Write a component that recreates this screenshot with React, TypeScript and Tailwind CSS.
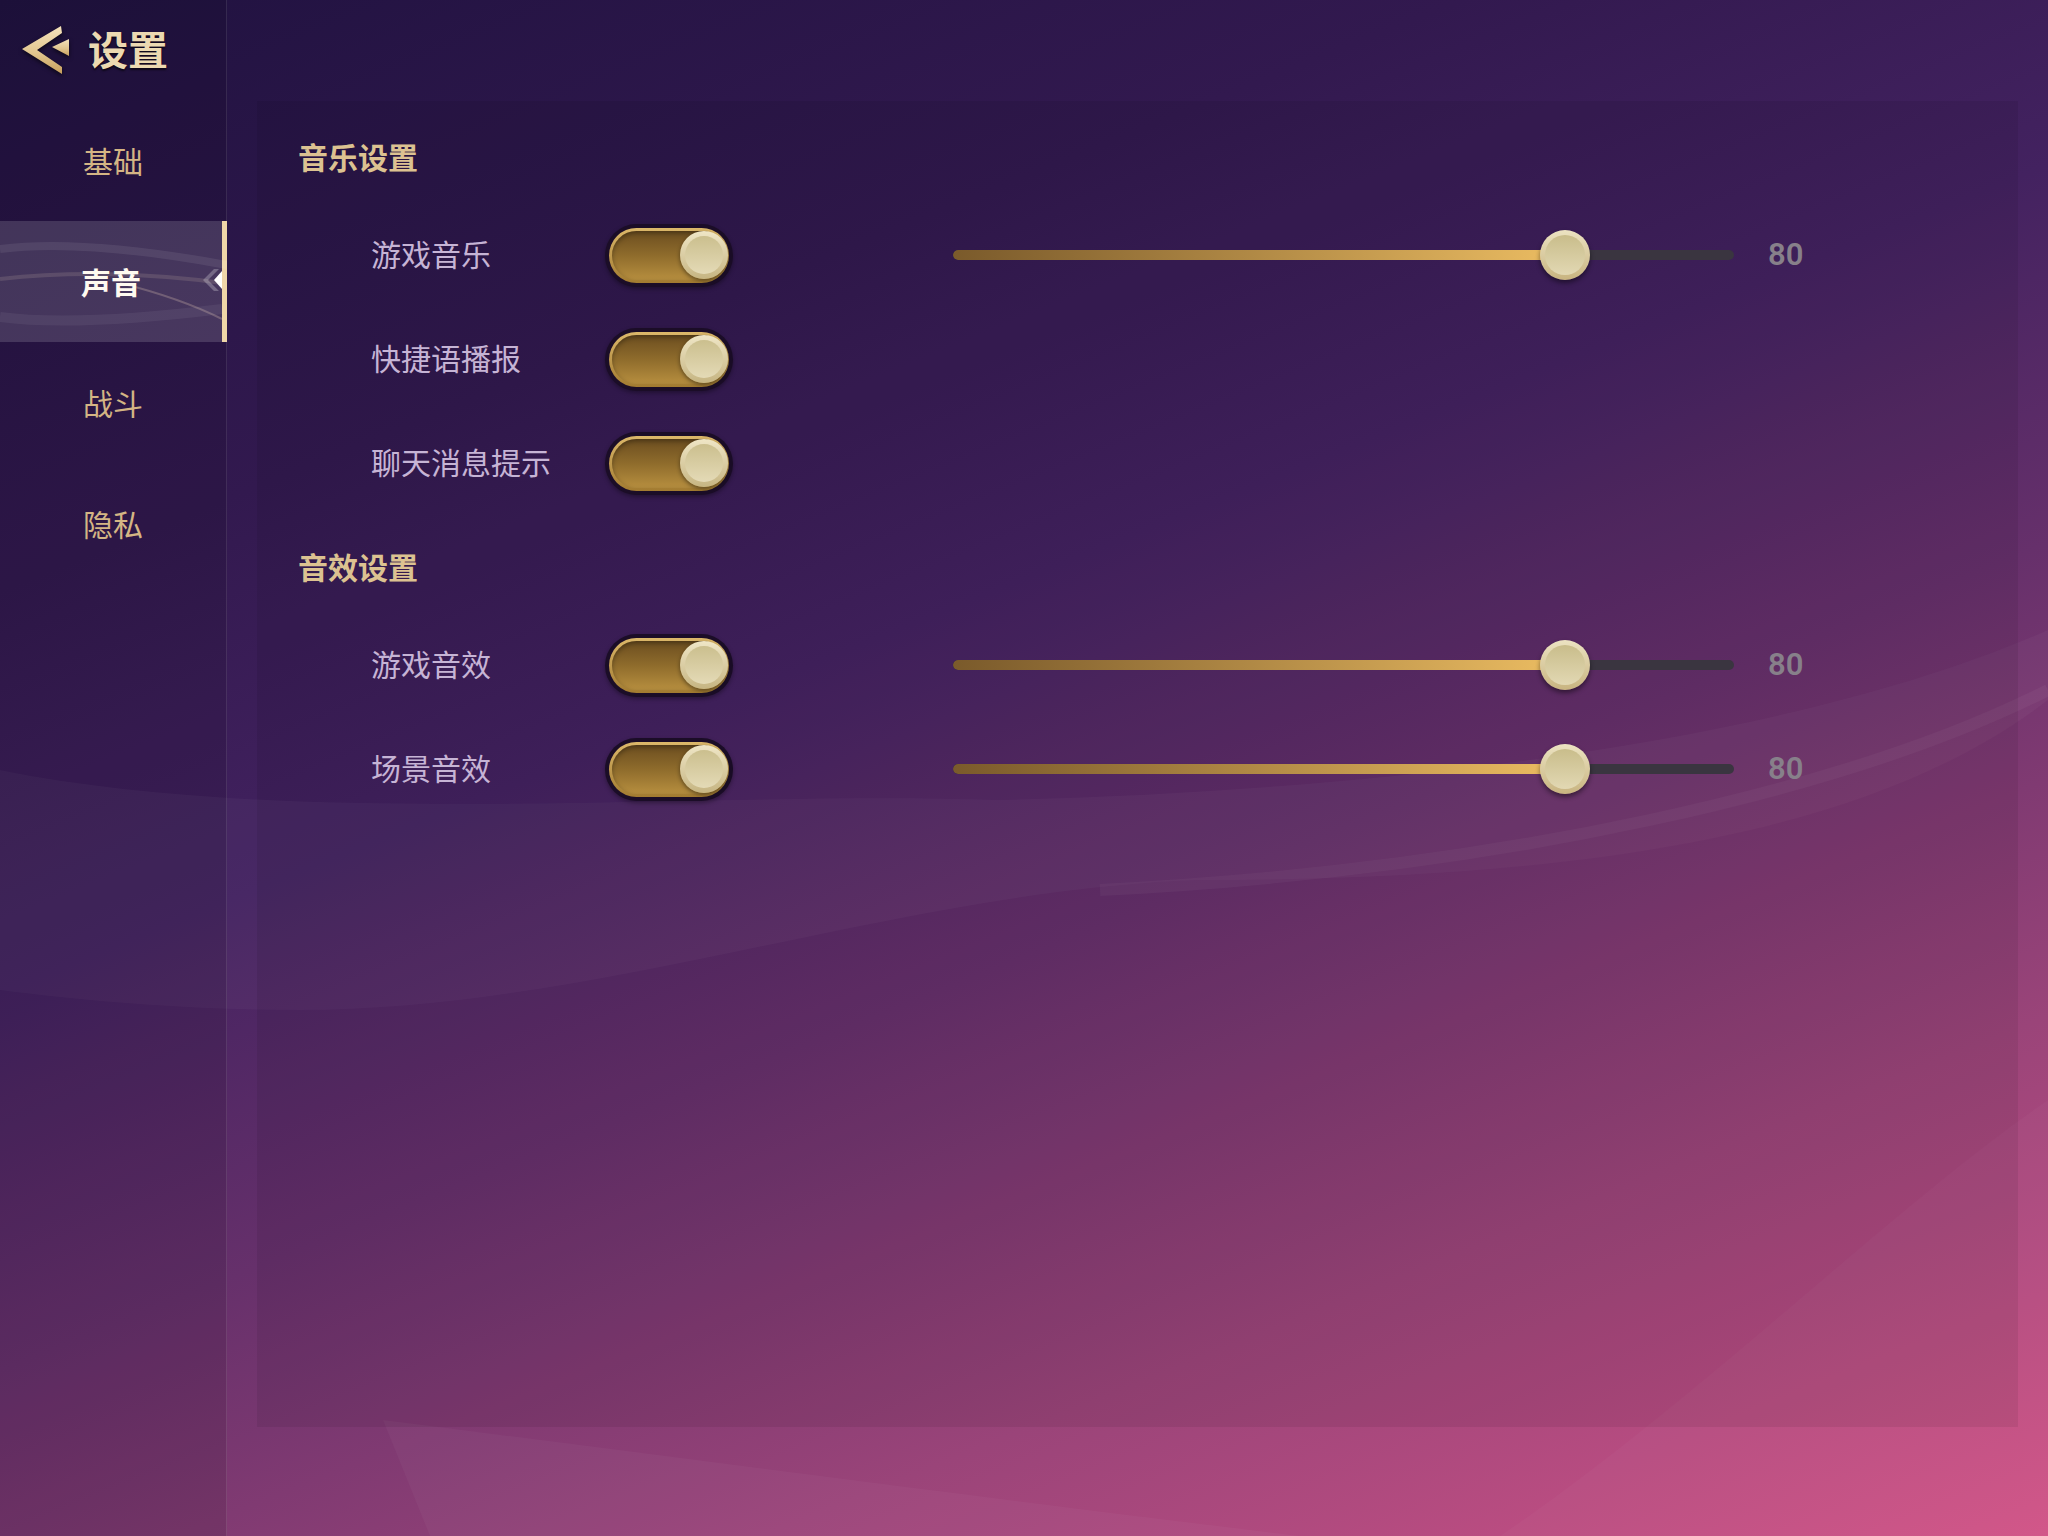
import React from 'react';

const font = "font-['Noto_Sans_CJK_SC','Liberation_Sans',sans-serif]";

const BackArrow = () => (
  <svg width="48" height="48" viewBox="0 0 48 48" className="drop-shadow-[0_2px_2px_rgba(0,0,0,0.6)]">
    <defs>
      <linearGradient id="arrowGold" x1="0" y1="0" x2="0" y2="1">
        <stop offset="0" stopColor="#f6e3bd" />
        <stop offset="0.55" stopColor="#e2c690" />
        <stop offset="1" stopColor="#c79f5c" />
      </linearGradient>
    </defs>
    <polygon points="0,23 39,0 40,7 15,24 40,41 40,48" fill="url(#arrowGold)" />
    <polygon points="30,21 47,13 47,30" fill="url(#arrowGold)" />
  </svg>
);

const ActiveStreaks = () => (
  <svg className="absolute inset-0 pointer-events-none" width="227" height="121" viewBox="0 0 227 121">
    <path d="M0,28 C60,20 140,28 227,44" stroke="#ffffff" strokeOpacity="0.08" strokeWidth="8" fill="none" />
    <path d="M0,58 C70,50 150,52 222,62" stroke="#f3d9c0" strokeOpacity="0.14" strokeWidth="4" fill="none" />
    <path d="M120,62 C160,72 190,82 222,98" stroke="#f3d9c0" strokeOpacity="0.25" strokeWidth="2" fill="none" />
    <path d="M0,96 C60,104 140,98 222,88" stroke="#ffffff" strokeOpacity="0.06" strokeWidth="10" fill="none" />
    <polygon points="203,59 214,48 219,48 208,59 219,70 214,70" fill="#ffffff" fillOpacity="0.25" />
    <polygon points="214,59 222,50 222,68" fill="#ffffff" />
  </svg>
);

const Toggle = () => (
  <div className="w-[128px] h-[63px] shrink-0 rounded-full bg-[#1b0d27] p-[4px] shadow-[0_2px_4px_rgba(0,0,0,0.35)]">
    <div className="relative h-full w-full rounded-full bg-gradient-to-b from-[#dcb86a] to-[#a27b30] p-[3px]">
      <div className="h-full w-full rounded-full bg-gradient-to-b from-[#6c4e20] via-[#8f6c2c] to-[#b78f3f] shadow-[inset_0_2px_5px_rgba(0,0,0,0.35)]" />
      <div className="absolute right-[1px] top-1/2 -translate-y-1/2 w-[48px] h-[48px] rounded-full bg-gradient-to-b from-[#efe6c6] to-[#c6b582] p-[5px] shadow-[0_2px_4px_rgba(0,0,0,0.45)]">
        <div className="h-full w-full rounded-full bg-gradient-to-b from-[#cbbf8e] to-[#e4dab6]" />
      </div>
    </div>
  </div>
);

const Slider = ({ value }: { value: number }) => (
  <div className="relative w-[781px] h-[50px] flex items-center">
    <div className="w-full h-[10px] rounded-full bg-[#3a3540] overflow-hidden">
      <div
        className="h-full rounded-full bg-gradient-to-r from-[#7a5a2b] to-[#ecbd62]"
        style={{ width: `calc(${value / 100} * (100% - 50px) + 25px)` }}
      />
    </div>
    <div
      className="absolute top-0 w-[50px] h-[50px] rounded-full bg-gradient-to-b from-[#ece3c2] to-[#c8b480] p-[5px] shadow-[0_3px_5px_rgba(0,0,0,0.45)]"
      style={{ left: `calc(${value / 100} * (100% - 50px) + 2px)` }}
    >
      <div className="h-full w-full rounded-full bg-gradient-to-b from-[#c9bd8b] to-[#e2d8b3]" />
    </div>
  </div>
);

type Row = { label: string; slider?: number };

const SettingRow = ({ row }: { row: Row }) => (
  <div className="flex items-center h-[64px] pl-[73px]">
    <div className="w-[234px] text-[30px] leading-none -mt-[4px] text-[#c6b4d5]">{row.label}</div>
    <Toggle />
    {row.slider !== undefined && (
      <div className="flex items-center ml-[220px]">
        <Slider value={row.slider} />
        <span className="ml-[34px] text-[31px] font-semibold text-[#87808a] font-['Roboto',sans-serif]">{row.slider}</span>
      </div>
    )}
  </div>
);

const Section = ({ title, rows, className }: { title: string; rows: Row[]; className?: string }) => (
  <div className={className}>
    <div className="h-[40px] flex items-center text-[30px] font-bold leading-none -mt-[2px] text-[#dcc291]">{title}</div>
    <div className="mt-[47px] flex flex-col gap-[40px]">
      {rows.map((r) => (
        <SettingRow key={r.label} row={r} />
      ))}
    </div>
  </div>
);

const navItems = ['基础', '声音', '战斗', '隐私'];

export default function App() {
  return (
    <div
      className={`relative flex w-[2048px] h-[1536px] overflow-hidden bg-[linear-gradient(158deg,#201240_0%,#32194f_25%,#432260_42%,#66306b_58%,#9a4479_78%,#d15387_100%)] ${font}`}
    >
      {/* background waves */}
      <svg className="absolute inset-0 pointer-events-none" width="2048" height="1536" viewBox="0 0 2048 1536">
        <path
          d="M0,770 C300,830 700,790 1000,800 C1400,790 1800,740 2048,630 L2048,700 C1880,830 1600,880 1200,880 C900,890 600,1010 300,1010 C180,1010 80,1000 0,990 Z"
          fill="#ffffff"
          fillOpacity="0.03"
        />
        <path d="M1100,890 C1500,870 1850,790 2048,690" stroke="#ffffff" strokeOpacity="0.04" strokeWidth="12" fill="none" />
        <path d="M383,1420 L430,1536 L1300,1536 C1000,1500 700,1460 383,1420 Z" fill="#ffffff" fillOpacity="0.03" />
        <path d="M1500,1536 C1700,1400 1900,1200 2048,1100 L2048,1536 Z" fill="#ffffff" fillOpacity="0.025" />
      </svg>

      {/* sidebar */}
      <div className="relative z-10 w-[227px] h-full shrink-0 flex flex-col bg-black/10 border-r border-white/10">
        <div className="h-[100px] flex items-center pl-[22px] gap-[18px]">
          <BackArrow />
          <span className="text-[40px] font-bold text-[#ecd9b1] [text-shadow:0_2px_2px_rgba(0,0,0,0.6)] leading-none -mt-[4px]">设置</span>
        </div>
        {navItems.map((item) =>
          item === '声音' ? (
            <div key={item} className="relative h-[121px] flex items-center justify-center bg-white/15 border-r-[5px] border-[#f0d6a8] -mr-[1px]">
              <ActiveStreaks />
              <span className="relative text-[30px] font-bold text-[#fffaf0]">{item}</span>
            </div>
          ) : (
            <div key={item} className="h-[121px] flex items-center justify-center text-[30px] text-[#d4b584]">
              {item}
            </div>
          )
        )}
      </div>

      {/* content */}
      <div className="relative z-10 flex-1 pt-[101px] pl-[30px] pr-[30px] pb-[109px]">
        <div className="h-full bg-black/[0.07] pl-[41px] pt-[37px]">
          <Section
            title="音乐设置"
            rows={[{ label: '游戏音乐', slider: 80 }, { label: '快捷语播报' }, { label: '聊天消息提示' }]}
          />
          <Section
            className="mt-[53px]"
            title="音效设置"
            rows={[{ label: '游戏音效', slider: 80 }, { label: '场景音效', slider: 80 }]}
          />
        </div>
      </div>
    </div>
  );
}
